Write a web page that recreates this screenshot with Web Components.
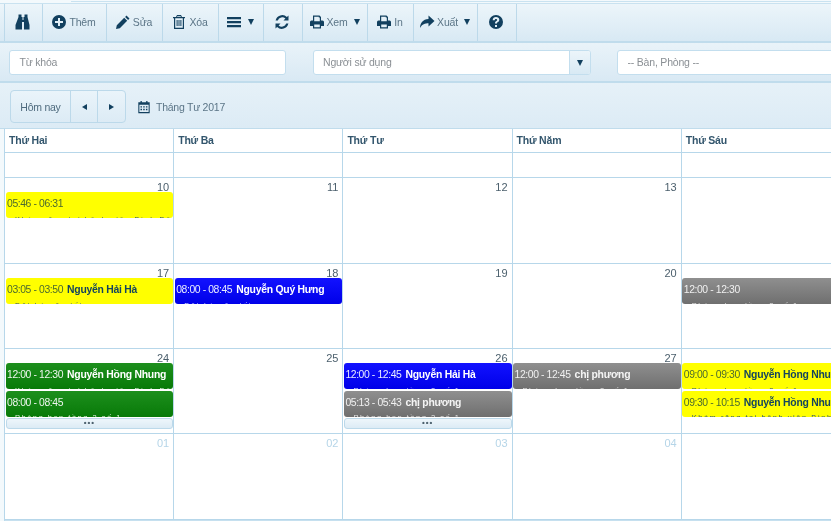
<!DOCTYPE html>
<html lang="vi">
<head>
<meta charset="utf-8">
<title>Lịch</title>
<style>
  html, body { margin: 0; height: 100%; overflow: hidden; background: #f3f9fc; }
  body { font: 11px "Liberation Sans", Arial, sans-serif; color: #33566d; filter: blur(.3px); }
  .top-rule { height: 1px; margin: 1px 0 0 71px; background: #c9e2f0; }
</style>
</head>
<body>

<div class="top-rule"></div>

<app-toolbar>
  <tool-btn w="38" icon="binoculars"></tool-btn>
  <tool-btn w="64" icon="plus">Thêm</tool-btn>
  <tool-btn w="56" icon="pencil">Sửa</tool-btn>
  <tool-btn w="56" icon="trash">Xóa</tool-btn>
  <tool-btn w="45" icon="bars" caret></tool-btn>
  <tool-btn w="39" icon="refresh"></tool-btn>
  <tool-btn w="65" icon="print" caret>Xem</tool-btn>
  <tool-btn w="46" icon="print">In</tool-btn>
  <tool-btn w="64" icon="share" caret>Xuất</tool-btn>
  <tool-btn w="40" icon="question"></tool-btn>
</app-toolbar>

<filter-bar>
  <filter-field w="277">Từ khóa</filter-field>
  <filter-field w="278" combo>Người sử dụng</filter-field>
  <filter-field w="260">-- Bàn, Phòng --</filter-field>
</filter-bar>

<date-bar label="Tháng Tư 2017"></date-bar>

<cal-grid>
  <cal-head>Thứ Hai</cal-head><cal-head>Thứ Ba</cal-head><cal-head>Thứ Tư</cal-head><cal-head>Thứ Năm</cal-head><cal-head>Thứ Sáu</cal-head>

  <cal-day></cal-day><cal-day></cal-day><cal-day></cal-day><cal-day></cal-day><cal-day></cal-day>

  <cal-day num="10"><cal-event color="yellow" time="05:46 - 06:31" note="Khám răng tại bệnh viện Bình Dân"></cal-event></cal-day>
  <cal-day num="11"></cal-day>
  <cal-day num="12"></cal-day>
  <cal-day num="13"></cal-day>
  <cal-day></cal-day>

  <cal-day num="17"><cal-event color="yellow" time="03:05 - 03:50" name="Nguyễn Hải Hà" note="Đặt bàn ăn tối"></cal-event></cal-day>
  <cal-day num="18"><cal-event color="blue" time="08:00 - 08:45" name="Nguyễn Quý Hưng" note="Đặt bàn ăn tối"></cal-event></cal-day>
  <cal-day num="19"></cal-day>
  <cal-day num="20"></cal-day>
  <cal-day><cal-event color="gray" time="12:00 - 12:30" note="Phòng họp tầng 2 số 1"></cal-event></cal-day>

  <cal-day num="24">
    <cal-event color="green" time="12:00 - 12:30" name="Nguyễn Hồng Nhung" note="Khám răng tại bệnh viện Bình Dân"></cal-event>
    <cal-event color="green" time="08:00 - 08:45" note="Phòng họp tầng 2 số 1"></cal-event>
    <more-btn></more-btn>
  </cal-day>
  <cal-day num="25"></cal-day>
  <cal-day num="26">
    <cal-event color="blue" time="12:00 - 12:45" name="Nguyễn Hải Hà" note="Phòng họp tầng 2 số 1"></cal-event>
    <cal-event color="gray" time="05:13 - 05:43" name="chị phương" note="Phòng họp tầng 2 số 1"></cal-event>
    <more-btn></more-btn>
  </cal-day>
  <cal-day num="27"><cal-event color="gray" time="12:00 - 12:45" name="chị phương" note="Phòng họp tầng 2 số 1"></cal-event></cal-day>
  <cal-day>
    <cal-event color="yellow" time="09:00 - 09:30" name="Nguyễn Hồng Nhung" note="Phòng họp tầng 2 số 1"></cal-event>
    <cal-event color="yellow" time="09:30 - 10:15" name="Nguyễn Hồng Nhung" note="Khám răng tại bệnh viện Bình Dân"></cal-event>
  </cal-day>

  <cal-day num="01" muted></cal-day>
  <cal-day num="02" muted></cal-day>
  <cal-day num="03" muted></cal-day>
  <cal-day num="04" muted></cal-day>
  <cal-day></cal-day>
</cal-grid>

<script>
const ICONS = {
  binoculars: '<path d="M3.500 0.500h3v2.500h1v3h1V3h1V0.500h3V3l2 8v4.500H9V8H7v7.500H0.500V11l3-8z"/>',
  plus: '<path fill-rule="evenodd" d="M8 1a7 7 0 1 0 0 14A7 7 0 0 0 8 1zM7 4h2v3h3v2H9v3H7V9H4V7h3z"/>',
  pencil: '<path d="M11.500 1.500l3 3-1.400 1.400-3-3zM9.200 3.800l3 3-7.400 7.400-3.800.8.800-3.800z"/>',
  trash: '<path fill-rule="evenodd" d="M6 1h4l1 2h3v1.200h-1V15H3V4.200H2V3h3zM6.400 2.200L6 3h4l-.4-.8zM4.200 4.200v9.600h7.600V4.200zM5.600 6h1v6h-1zm1.900 0h1v6h-1zm1.900 0h1v6h-1z"/>',
  bars: '<path d="M1 3h14v2.200H1zM1 7h14v2.200H1zM1 11h14v2.200H1z"/>',
  refresh: '<path d="M14.500 1.500v5h-5l1.900-1.900A4.600 4.600 0 0 0 3.800 6.400H1.600a6.800 6.800 0 0 1 11.300-3.400zM1.500 14.500v-5h5l-1.900 1.900a4.600 4.600 0 0 0 7.600-1.800h2.200a6.800 6.800 0 0 1-11.300 3.400z"/>',
  print: '<path fill-rule="evenodd" d="M4 1.500h6.500L12 3v3.500h1.500A1.500 1.500 0 0 1 15 8v4h-3v2.500H4V12H1V8a1.500 1.500 0 0 1 1.500-1.500H4zM5.200 2.700v4.600h5.600V3.500h-1V2.700zM5.200 10.500v2.800h5.600v-2.800z"/>',
  share: '<path d="M9.500 1.500L15.500 7l-6 5.500V9.200C6 9.200 3.200 10 1 14c.2-5 2.800-8.600 8.500-8.900z"/>',
  question: '<path fill-rule="evenodd" d="M8 1a7 7 0 1 0 0 14A7 7 0 0 0 8 1zM7 11h2v2H7zm1-8c2 0 3.300 1.100 3.300 2.700 0 1.200-.6 1.800-1.400 2.400-.6.400-.9.700-.9 1.400H7c0-1.300.5-1.900 1.200-2.400.6-.4.9-.7.9-1.200 0-.5-.4-.9-1.100-.9-.8 0-1.200.5-1.300 1.200H4.700C4.800 4.200 6 3 8 3z"/>',
  calendar: '<path fill-rule="evenodd" d="M4 1h1.500v1.500h5V1H12v1.500h2.500V15h-13V2.500H4zM2.700 5.500v8.300h10.600V5.500zM4 7h1.700v1.600H4zm3.100 0h1.700v1.600H7.100zm3.100 0h1.700v1.600h-1.700zM4 10h1.700v1.600H4zm3.100 0h1.700v1.600H7.100zm3.100 0h1.700v1.600h-1.700z"/>'
};
const svgIcon = (name, size) => `<svg width="${size}" height="${size}" viewBox="0 0 16 16" fill="currentColor" aria-hidden="true">${ICONS[name]}</svg>`;

const CARET_CSS = `
  .caret { flex: none; width: 0; height: 0; border-left: 3.5px solid transparent; border-right: 3.5px solid transparent; border-top: 6px solid #12405f; }
`;

class AppToolbar extends HTMLElement {
  constructor() {
    super();
    this.attachShadow({ mode: 'open' }).innerHTML = `
      <style>
        :host {
          display: flex;
          height: 37px;
          margin-top: 1px;
          padding-left: 4px;
          background: linear-gradient(#ecf5fa, #d8e9f4);
          border-top: 1px solid #c9e2f0;
          border-bottom: 2px solid #c0dcec;
        }
      </style>
      <slot></slot>`;
  }
}

class ToolBtn extends HTMLElement {
  connectedCallback() {
    const caret = this.hasAttribute('caret');
    this.attachShadow({ mode: 'open' }).innerHTML = `
      <style>
        :host {
          display: flex;
          align-items: center;
          justify-content: center;
          gap: 2px;
          box-sizing: border-box;
          width: ${this.getAttribute('w')}px;
          padding: 0 2px 1px 0;
          border-left: 1px solid #bcd9ea;
          color: #5b7587;
          font-size: 10.5px;
          letter-spacing: -.2px;
        }
        :host(:last-of-type) { border-right: 1px solid #bcd9ea; }
        svg { color: #12405f; flex: none; }
        ${CARET_CSS}
        .caret { margin-left: 4px; }
      </style>
      ${svgIcon(this.getAttribute('icon'), 16)}<slot></slot>${caret ? '<span class="caret"></span>' : ''}`;
  }
}

class FilterBar extends HTMLElement {
  constructor() {
    super();
    this.attachShadow({ mode: 'open' }).innerHTML = `
      <style>
        :host {
          display: flex;
          gap: 26.5px;
          height: 25px;
          padding: 7px 0 6px 9px;
          background: linear-gradient(#e9f3f9, #d9e9f4);
          border-bottom: 2px solid #c0dcec;
          width: 1000px;
        }
      </style>
      <slot></slot>`;
  }
}

class FilterField extends HTMLElement {
  connectedCallback() {
    const combo = this.hasAttribute('combo');
    this.attachShadow({ mode: 'open' }).innerHTML = `
      <style>
        :host {
          display: flex;
          box-sizing: border-box;
          width: ${this.getAttribute('w')}px;
          background: #fff;
          border: 1px solid #c3deee;
          border-radius: 3px;
          color: #8a8f94;
          font-size: 10.5px;
          letter-spacing: -.2px;
          overflow: hidden;
        }
        .text { flex: 1; padding-left: 9.5px; line-height: 23px; }
        .drop {
          width: 20px;
          display: flex;
          align-items: center;
          justify-content: center;
          border-left: 1px solid #c3deee;
          background: linear-gradient(#ecf5fa, #d8e9f4);
        }
        ${CARET_CSS}
      </style>
      <span class="text"><slot></slot></span>${combo ? '<span class="drop"><span class="caret"></span></span>' : ''}`;
  }
}

class DateBar extends HTMLElement {
  connectedCallback() {
    this.attachShadow({ mode: 'open' }).innerHTML = `
      <style>
        :host {
          display: flex;
          align-items: center;
          height: 33px;
          padding: 7px 0 5px 10px;
          background: linear-gradient(#e6f1f8, #dcebf5);
          border-bottom: 1px solid #c0dcec;
          color: #5b7587;
          font-size: 10.5px;
          letter-spacing: -.25px;
        }
        .group {
          display: flex;
          width: 116px;
          height: 33px;
          box-sizing: border-box;
          border: 1px solid #bcd9ea;
          border-radius: 4px;
          background: linear-gradient(#eaf4fa, #dcebf5);
        }
        .group span {
          display: flex;
          align-items: center;
          justify-content: center;
          border-left: 1px solid #bcd9ea;
          width: 27px;
          color: #12405f;
        }
        .group .today { width: 60px; border-left: 0; color: #4f6b7e; }
        .group i { width: 0; height: 0; border-top: 3px solid transparent; border-bottom: 3px solid transparent; }
        .group .prev { border-right: 5px solid #12405f; }
        .group .next { border-left: 5px solid #12405f; }
        .cal { display: flex; color: #12405f; margin: 0 5px 0 11px; }
      </style>
      <div class="group"><span class="today">Hôm nay</span><span><i class="prev"></i></span><span><i class="next"></i></span></div>
      <span class="cal">${svgIcon('calendar', 14)}</span>
      <span>${this.getAttribute('label')}</span>`;
  }
}

class CalGrid extends HTMLElement {
  constructor() {
    super();
    this.attachShadow({ mode: 'open' }).innerHTML = `
      <style>
        :host {
          display: grid;
          grid-template-columns: repeat(5, 169.2px);
          grid-template-rows: 24px 25px 86px 85px 85px 86px;
          margin-left: 4px;
          width: 847px;
          background: #fff;
          border-left: 1px solid #b7d7ea;
          border-bottom: 2px solid #c6e0ef;
        }
      </style>
      <slot></slot>`;
  }
}

class CalHead extends HTMLElement {
  constructor() {
    super();
    this.attachShadow({ mode: 'open' }).innerHTML = `
      <style>
        :host {
          display: block;
          box-sizing: border-box;
          border-right: 1px solid #b7d7ea;
          border-bottom: 1px solid #b7d7ea;
          padding-left: 4px;
          color: #33566d;
          font-weight: bold;
          font-size: 10.5px;
          letter-spacing: -.2px;
          line-height: 22px;
        }
      </style>
      <slot></slot>`;
  }
}

class CalDay extends HTMLElement {
  connectedCallback() {
    const num = this.getAttribute('num') || '&nbsp;';
    const muted = this.hasAttribute('muted');
    this.attachShadow({ mode: 'open' }).innerHTML = `
      <style>
        :host {
          display: flex;
          flex-direction: column;
          gap: 1.5px;
          box-sizing: border-box;
          min-width: 0;
          padding-left: .5px;
          border-right: 1px solid #b7d7ea;
          border-bottom: 1px solid #b7d7ea;
          overflow: hidden;
        }
        .num {
          height: 12.5px;
          line-height: 19px;
          text-align: right;
          padding-right: 4px;
          font-size: 11px;
          color: ${muted ? '#b5d5e8' : '#4b5f6c'};
        }
      </style>
      <div class="num">${num}</div>
      <slot></slot>`;
  }
}

const EVENT_COLORS = {
  yellow: { bg: '#ffff00', time: '#4b6a2e', name: '#14445e', note: '#33566d' },
  blue:   { bg: 'linear-gradient(#1212ff, #0000e8)', time: '#e8ecff', name: '#fff', note: '#d8dcff' },
  green:  { bg: 'linear-gradient(#1d8f1d, #087a08)', time: '#eef6ee', name: '#fff', note: '#dfeedf' },
  gray:   { bg: 'linear-gradient(#8f8f8f, #6f6f6f)', time: '#f0f0f0', name: '#f4f4f4', note: '#e4e4e4' }
};

class CalEvent extends HTMLElement {
  connectedCallback() {
    const c = EVENT_COLORS[this.getAttribute('color')];
    const name = this.getAttribute('name');
    this.attachShadow({ mode: 'open' }).innerHTML = `
      <style>
        :host {
          display: block;
          box-sizing: border-box;
          flex: none;
          height: 26px;
          padding: 5px 0 0 1.5px;
          background: ${c.bg};
          border-radius: 3px;
          overflow: hidden;
          white-space: nowrap;
          font-size: 10.4px;
          line-height: 14px;
          color: ${c.time};
        }
        .time { letter-spacing: -.4px; }
        b { color: ${c.name}; letter-spacing: -.25px; margin-left: 4px; }
        .note { color: ${c.note}; margin: 4.5px 0 0 8px; font-size: 7.5px; line-height: 8px; letter-spacing: 1.5px; }
      </style>
      <div><span class="time">${this.getAttribute('time')}</span>${name ? `<b>${name}</b>` : ''}</div>
      <div class="note">${this.getAttribute('note') || ''}</div>`;
  }
}

class MoreBtn extends HTMLElement {
  constructor() {
    super();
    this.attachShadow({ mode: 'open' }).innerHTML = `
      <style>
        :host {
          display: block;
          box-sizing: border-box;
          height: 11px;
          flex: none;
          border: 1px solid #bcd9ea;
          border-radius: 3px;
          background: linear-gradient(#eef6fb, #dcebf5);
          text-align: center;
          font-size: 8px;
          font-weight: bold;
          line-height: 7px;
          letter-spacing: 1px;
          color: #4b5f6c;
        }
      </style>
      •••`;
  }
}

customElements.define('app-toolbar', AppToolbar);
customElements.define('tool-btn', ToolBtn);
customElements.define('filter-bar', FilterBar);
customElements.define('filter-field', FilterField);
customElements.define('date-bar', DateBar);
customElements.define('cal-grid', CalGrid);
customElements.define('cal-head', CalHead);
customElements.define('cal-day', CalDay);
customElements.define('cal-event', CalEvent);
customElements.define('more-btn', MoreBtn);
</script>
</body>
</html>
